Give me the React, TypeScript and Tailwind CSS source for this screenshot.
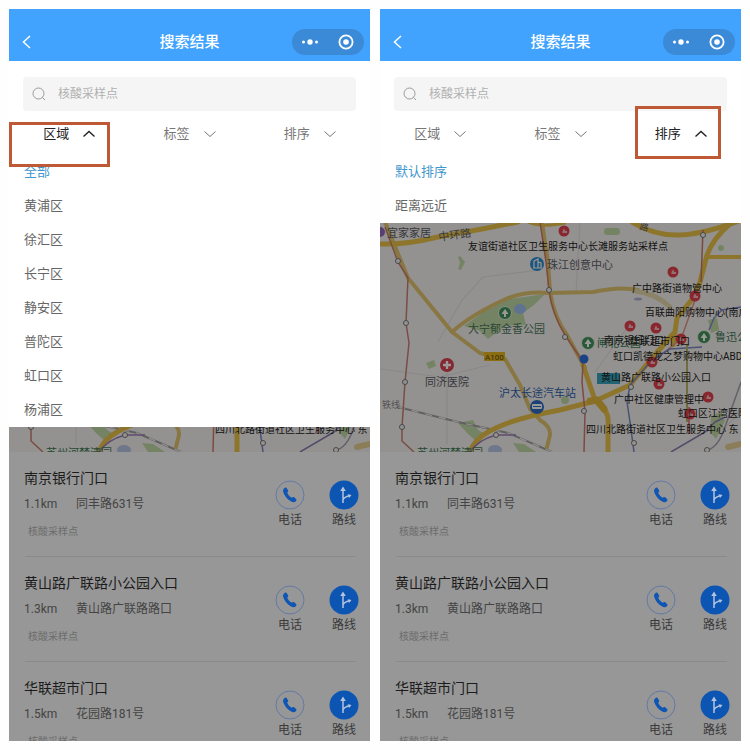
import clsx from "clsx";

interface Site {
  name: string;
  distance: string;
  address: string;
}

interface ScreenProps {
  id: string;
  active: string;
  options: string[];
  markClass: string;
}

const FILTERS = ["区域", "标签", "排序"];

const DISTRICTS = ["全部", "黄浦区", "徐汇区", "长宁区", "静安区", "普陀区", "虹口区", "杨浦区"];

const SORTS = ["默认排序", "距离远近"];

const SITES: Site[] = [
  { name: "南京银行门口", distance: "1.1km", address: "同丰路631号" },
  { name: "黄山路广联路小公园入口", distance: "1.3km", address: "黄山路广联路路口" },
  { name: "华联超市门口", distance: "1.5km", address: "花园路181号" },
];

const PINS = [
  [184, 9], [293, 50], [315, 74], [250, 104], [276, 106],
  [301, 117], [272, 140], [279, 162], [328, 175], [310, 192],
];

const STATIONS = [
  [18, 39], [26, 101], [25, 160], [22, 205], [169, 68], [323, 13],
  [185, 115], [204, 189], [251, 165], [254, 221], [116, 213], [327, 228],
];

const PLACES: { x: number; y: number; text: string }[] = [
  { x: 88, y: 28, text: "友谊街道社区卫生服务中心长滩服务站采样点" },
  { x: 252, y: 70, text: "广中路街道物管中心" },
  { x: 265, y: 94, text: "百联曲阳购物中心(南广场)" },
  { x: 224, y: 122, text: "南京银行门口" },
  { x: 250, y: 123, text: "华联超市门口" },
  { x: 233, y: 138, text: "虹口凯德龙之梦购物中心ABD" },
  { x: 221, y: 159, text: "黄山路广联路小公园入口" },
  { x: 234, y: 181, text: "广中社区健康管理中" },
  { x: 298, y: 195, text: "虹口区江湾医院" },
  { x: 206, y: 211, text: "四川北路街道社区卫生服务中心 东" },
];

function CityMap() {
  return (
    <svg
      className="block h-[230px] w-full"
      viewBox="0 0 361 230"
      preserveAspectRatio="xMidYMax slice"
      role="img"
      aria-label="地图"
    >
      <rect width="361" height="230" fill="#f7f4f1" />

      {/* parks */}
      <g fill="#c2dba5">
        <path d="M84 104 110 85 130 77 165 72 154 83 143 91 146 103 125 104 108 117 100 109Z" />
        <path d="M80 34l5 6-4 8-3-1 2-6-2-6z" />
        <path d="M78 201l15-3 5 10 7 4-8 8-10-9z" />
        <path d="M133 221l11 1 12 8h-17z" />
        <rect x="224" y="6" width="16" height="7" rx="3" />
        <path d="M46 141l8-3 2 6-7 3zM328 98l9-2 2 12-8 3zM331 195l10-6 4 10-9 18-6-7z" />
        <circle cx="185" cy="178" r="4" />
        <circle cx="341" cy="26" r="3" />
      </g>
      <ellipse cx="140" cy="87" rx="6" ry="5" fill="#9fbff0" />
      <ellipse cx="115" cy="228" rx="7" ry="5" fill="#b9c8e6" />
      <ellipse cx="258" cy="77" rx="4" ry="1.500" fill="#b0b4d6" />

      {/* side streets */}
      <g fill="none" stroke="#e6e2e0" strokeWidth="1.200">
        <path d="M58 120 82 78 103 55 160 48" />
        <path d="M67 150V222M0 147 60 155 110 143" />
        <path d="M200 0 196 70M215 150l35-48M340 210l21-20" />
      </g>

      {/* railway */}
      <path d="M18 185 78 200 128 211 172 230" fill="none" stroke="#a39fa0" strokeWidth="2" />
      <path
        d="M18 185 78 200 128 211 172 230"
        fill="none"
        stroke="#f7f4f1"
        strokeWidth="1.200"
        strokeDasharray="7 7"
      />

      {/* main roads */}
      <g fill="none" strokeLinecap="round" strokeLinejoin="round">
        <g stroke="#e3c670" strokeWidth="4">
          <path d="M5 0 28 56 72 110 100 131 125 137 140 163 150 187 160 198Q171 205 170 213L167 225" />
          <path d="M72 110Q92 92 128 76 148 69 168 71L213 70Q240 64 258 68" />
          <path d="M255 69Q275 71 290 85" strokeWidth="5" stroke="#e8dbae" />
          <path d="M162 0 168 40 170 70Q174 95 187 113L205 146" />
        </g>
        <g stroke="#ecc44a" strokeWidth="5">
          <path d="M0 22Q25 23 58 15L102 7 138 0" />
          <path d="M148 0Q160 6 185 1" strokeWidth="3" />
          <path d="M252 0Q275 14 300 13T361 -2" />
          <path d="M352 0Q333 16 327 33L320 60 313 76 297 96 293 123" />
          <path d="M327 35H361" strokeWidth="4" />
          <path d="M90 230Q94 218 108 210 130 197 180 188L215 179 250 163 272 136 293 112" />
          <path d="M203 143 215 178 226 190Q229 195 228 205V230" />
          <path d="M348 225 361 222" strokeWidth="6" stroke="#e8d191" />
        </g>
        <path d="M210 179 217 178 224 187" stroke="#e6bb3c" strokeWidth="7" />
      </g>

      {/* metro lines */}
      <g fill="none" strokeWidth="1.500" strokeLinejoin="round">
        <path d="M5 5 18 40 28 56 26 101 29 121 25 160 22 205 22 219 34 230" stroke="#c98070" />
        <path d="M160 0 166 40 169 68Q172 92 185 113L203 140 202 160 205 190 204 230" stroke="#d07a70" />
        <path d="M323 8 321 60" stroke="#c77a68" />
        <path d="M315 78 301 117 272 140" stroke="#e39484" />
        <path d="M250 163 247 180 250 200 254 230" stroke="#7887c4" />
        <path d="M250 163 272 138 290 127 322 125" stroke="#7d8ac8" />
        <path d="M329 108 334 96 342 88 361 85" stroke="#7d8ac8" />
        <path d="M307 123V200" stroke="#bab46b" strokeWidth="2" />
        <path d="M309 185V212" stroke="#dd6a67" />
        <path d="M291 230 325 210 335 200 345 195" stroke="#8e7bb1" />
        <path d="M361 160 345 205Q338 226 327 228" stroke="#a5a1b0" />
        <path d="M90 230Q98 218 116 213L136 213" stroke="#9c7eb9" />
      </g>
      <g fill="#f7f4f1" stroke="#777777" strokeWidth="1">
        {STATIONS.map(([x, y]) => (
          <circle key={`${x}-${y}`} cx={x} cy={y} r="2.500" />
        ))}
      </g>

      {/* sights */}
      {[[125, 91], [208, 121], [324, 115]].map(([x, y]) => (
        <g key={x} transform={`translate(${x} ${y})`}>
          <circle r="6.500" fill="#43945a" stroke="#e4efdf" />
          <path d="M0-4 3.500 1H1V4H-1V1H-3.500Z" fill="#ffffff" />
        </g>
      ))}
      <circle cx="157" cy="42" r="7" fill="#2f8fd0" />
      <path d="M154 46v-7l4-2v9M158 40l3 1v5M153 46h9" fill="none" stroke="#ffffff" strokeWidth="1.200" />
      <circle cx="157" cy="185" r="7" fill="#2f6fc4" />
      <rect x="152" y="182" width="10" height="5" rx="1" fill="#ffffff" />
      <path d="M153 184.500h8M154 188v1M160 188v1" stroke="#2f6fc4" strokeWidth="1" />
      <circle cx="67" cy="143" r="7" fill="#dc4250" />
      <path d="M67 139v8M63 143h8" stroke="#ffffff" strokeWidth="2.400" />
      <path d="M0 5a5 5 0 010 10z" fill="#8c6cbe" />
      <circle cx="204" cy="137" r="4.500" fill="#2c6fe0" />
      <rect x="217" y="151" width="23" height="11" fill="#38a6bf" />
      <rect x="104" y="130" width="21" height="9" fill="#e9b81f" />

      <g fontSize="11" fill="#5c6068">
        <text x="7" y="15">宜家家居</text>
        <text x="59" y="19" transform="rotate(-8 59 19)">中环路</text>
        <text x="167" y="47">珠江创意中心</text>
        <text x="45" y="164">同济医院</text>
        <text x="335" y="119" fill="#3d7a55">鲁迅公园</text>
        <text x="217" y="125" fill="#3d7a55">闸北公园</text>
        <text x="88" y="111" fill="#49775a">大宁郁金香公园</text>
        <text x="119" y="175" fill="#2f62ad">沪太长途汽车站</text>
        <text x="37" y="235" fill="#3d7a55">苏州河梦清园</text>
      </g>
      <text x="2" y="186" fontSize="9" fill="#8a8888">铁线</text>
      <text x="259" y="7" fontSize="9" fill="#5c6068" transform="rotate(14 259 7)">路</text>
      <text x="105" y="138" fontSize="8" fill="#5c4a10">A100</text>

      {PINS.map(([x, y]) => (
        <g key={`${x}-${y}`} transform={`translate(${x} ${y})`}>
          <circle r="5.500" fill="#e5414f" />
          <path d="M0-2.500 1.500 0H3V2H-1.500V0Z" fill="#f6b9be" />
        </g>
      ))}
      <g fontSize="10" fill="#222222">
        {PLACES.map((p) => (
          <text key={p.text} x={p.x} y={p.y}>{p.text}</text>
        ))}
      </g>

      <rect width="361" height="230" fill="#000000" opacity="0.4" />
    </svg>
  );
}

function Chevron({ up }: { up: boolean }) {
  return (
    <svg className="h-2 w-3" viewBox="0 0 12 8" fill="none" stroke="currentColor" strokeWidth={up ? 1.4 : 1}>
      <path d={up ? "M.5 6.500 6 1.500 11.500 6.500" : "M.5 1.500 6 6.500 11.500 1.500"} />
    </svg>
  );
}

function Header() {
  return (
    <header className="flex h-[52px] shrink-0 items-center bg-[#41a3fd] px-1.5 pt-[14px] text-white">
      <div className="flex flex-1">
        <button type="button" aria-label="返回" className="px-1.5">
          <svg className="h-4 w-3" viewBox="0 0 12 16" fill="none" stroke="currentColor" strokeWidth="1.5">
            <path d="M9 2 2.500 8 9 14" />
          </svg>
        </button>
      </div>
      <h1 className="text-[15px] font-medium">搜索结果</h1>
      <div className="flex flex-1 justify-end">
        <div className="flex h-[26px] w-[72px] items-center justify-around rounded-full bg-[#3a8ad8]">
          <button type="button" aria-label="更多">
            <svg className="h-4 w-4" viewBox="0 0 16 16" fill="currentColor">
              <circle cx="1.500" cy="8" r="1.500" />
              <circle cx="8" cy="8" r="2.700" />
              <circle cx="14.500" cy="8" r="1.500" />
            </svg>
          </button>
          <button type="button" aria-label="关闭">
            <svg className="h-4 w-4" viewBox="0 0 16 16">
              <circle cx="8" cy="8" r="6.600" fill="none" stroke="currentColor" strokeWidth="1.800" />
              <circle cx="8" cy="8" r="2.800" fill="currentColor" />
            </svg>
          </button>
        </div>
      </div>
    </header>
  );
}

function SiteCard({ site }: { site: Site }) {
  return (
    <li>
      <div className="flex items-start justify-between pr-[11px] pl-[15px]">
        <div className="pt-4 pb-4">
          <h2 className="text-sm leading-5 text-[#1c1c1c]">{site.name}</h2>
          <p className="mt-1.5 flex text-xs leading-5 text-[#444444]">
            <span className="w-[52px]">{site.distance}</span>
            <span>{site.address}</span>
          </p>
          <p className="mt-2.5 pl-1 text-[10px] leading-4 text-[#6c6c6c]">核酸采样点</p>
        </div>
        <div className="flex gap-6 pt-7 text-xs leading-4 text-[#3a3a3a]">
          <button type="button" className="flex w-[30px] flex-col items-center gap-0.5">
            <svg className="h-[30px] w-[30px]" viewBox="0 0 30 30">
              <circle cx="15" cy="15" r="14" fill="none" stroke="#6379a6" strokeWidth="1" />
              <path
                d="M9.300 8.200C10 7.500 11 7.400 11.600 8.100L13 10.200C13.400 10.900 13.300 11.600 12.700 12.100L12.200 12.600C12.700 14.600 14.700 16.900 16.700 17.800L17.500 17.300C18.100 16.900 18.800 16.900 19.400 17.400L21.100 19.100C21.700 19.700 21.600 20.600 20.900 21.200 19.800 22.300 17.900 22.500 16.200 21.500 12.400 19.400 9.400 15.900 8.200 12 7.800 10.500 8.200 9.200 9.300 8.200Z"
                fill="#0f55b3"
              />
            </svg>
            电话
          </button>
          <button type="button" className="flex w-[30px] flex-col items-center gap-0.5">
            <svg className="h-[30px] w-[30px]" viewBox="0 0 30 30">
              <circle cx="15" cy="15" r="14.500" fill="#0d55b2" />
              <path d="M14 23V9M14 20C14.500 17.500 17 16.500 21 15.500" fill="none" stroke="#b4c3dc" strokeWidth="1.500" />
              <path d="M14 6.500 16.800 11H11.200ZM22.500 15 18.600 14.200 20 18Z" fill="#b4c3dc" />
            </svg>
            路线
          </button>
        </div>
      </div>
      <hr className="mr-3.5 ml-4 border-[#8a8a8a]" />
    </li>
  );
}

function Screen({ id, active, options, markClass }: ScreenProps) {
  return (
    <section className="flex min-w-0 flex-1 flex-col overflow-hidden bg-white">
      <Header />

      <div className="px-3.5 pt-4">
        <label htmlFor={id} className="flex h-[34px] items-center gap-3 rounded-sm bg-[#f5f5f5] px-[9px]">
          <svg className="h-3.5 w-3.5 text-[#999999]" viewBox="0 0 14 14" fill="none" stroke="currentColor" strokeWidth="1">
            <circle cx="6.500" cy="6.500" r="5.500" />
            <path d="M10.500 10.500 13 13" />
          </svg>
          <input
            id={id}
            type="text"
            aria-label="搜索"
            placeholder="核酸采样点"
            className="min-w-0 flex-1 text-xs outline-none placeholder:text-[#b0b0b0]"
          />
        </label>
      </div>

      {/* Filter tabs */}
      <div className="flex h-11 shrink-0 pt-0.5">
        {FILTERS.map((name) => (
          <div key={name} className="relative flex flex-1 justify-center">
            <button
              type="button"
              aria-expanded={name === active}
              className={clsx(
                "flex items-center gap-3.5 text-[13px]",
                name === active ? "text-[#222222]" : "text-[#777777]"
              )}
            >
              {name}
              <Chevron up={name === active} />
            </button>
            {name === active && (
              <span className={clsx("pointer-events-none absolute z-20 border-3 border-[#bd5a35]", markClass)} />
            )}
          </div>
        ))}
      </div>

      {/* Results, dimmed behind the open menu */}
      <div className="relative min-h-0 flex-1 bg-[#979797]">
        <ul className="absolute inset-x-0 top-0 z-10 bg-white">
          {options.map((option, i) => (
            <li key={option}>
              <button
                type="button"
                className={clsx(
                  "block h-[34px] w-full pl-[15px] text-left text-[13px]",
                  i === 0 ? "text-[#3f97cd]" : "text-[#666666]"
                )}
              >
                {option}
              </button>
            </li>
          ))}
        </ul>
        <div className="pt-[67px]">
          <CityMap />
        </div>
        <ul>
          {SITES.map((site) => (
            <SiteCard key={site.name} site={site} />
          ))}
        </ul>
      </div>
    </section>
  );
}

export default function App() {
  return (
    <main className="flex h-screen gap-2.5 bg-[#fefefe] p-[9px] font-['Roboto','Noto_Sans_CJK_SC',sans-serif]">
      <Screen id="search-area" active="区域" options={DISTRICTS} markClass="top-[9px] left-0 h-[45px] w-[101px]" />
      <Screen id="search-sort" active="排序" options={SORTS} markClass="-top-[7px] left-3.5 h-[53px] w-[86px]" />
    </main>
  );
}
